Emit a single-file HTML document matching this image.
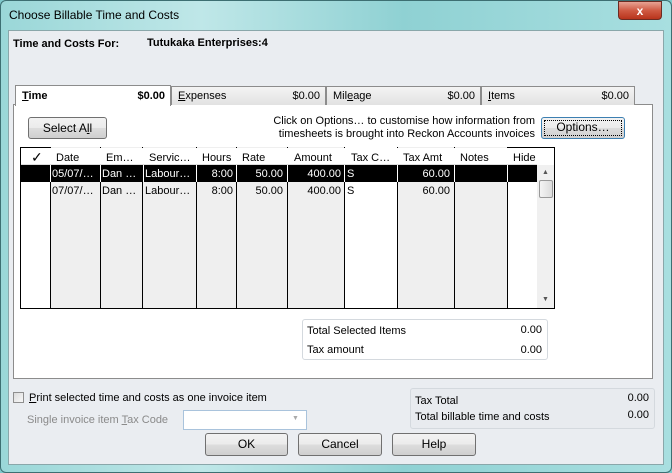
<!DOCTYPE html>
<html><head><style>
*{box-sizing:border-box;margin:0;padding:0}
body{width:672px;height:473px;position:relative;overflow:hidden;font-family:"Liberation Sans",sans-serif;font-size:11px;color:#000;background:#7fc9cc}
.abs{position:absolute}
.frame{left:0;top:0;width:672px;height:473px;background:linear-gradient(90deg,#9ad7d8,#bfe7e8 30%,#8fd1d3 60%,#a8dfe0);border:1px solid #3d6f72;border-radius:6px}
.client{left:8px;top:30px;width:656px;height:435px;background:#eaedf1;border:1px solid #8aa7aa}
.btn{position:absolute;border:1px solid #707070;border-radius:3px;background:linear-gradient(#f2f2f2,#ebebeb 50%,#dddddd 51%,#cfcfcf);text-align:center;font-size:12px}
.tab{position:absolute;top:86px;height:19px;border:1px solid #8c8c8c;border-bottom:none;background:linear-gradient(#f4f4f4,#e2e2e2);font-size:11px;padding:3px 4px 0 6px}
.tab span{position:absolute;right:5px;top:3px}
.col{position:absolute;top:147px;height:161px;border-right:1px solid #000}
.h{position:absolute;top:152px;font-size:11px}
.c{position:absolute;font-size:11px}
</style></head><body>
<div class="abs frame"></div>
<div class="abs" style="left:9px;top:8px;font-size:12px;color:#000">Choose Billable Time and Costs</div>
<div class="abs" style="left:618px;top:1px;width:44px;height:19px;border:1px solid #6b2b22;border-radius:0 0 4px 4px;background:linear-gradient(#e6a394,#cf5a43 50%,#b8341c);color:#fff;font-weight:bold;text-align:center;font-size:12px;line-height:18px">x</div>
<div class="abs client"></div>
<div class="abs" style="left:13px;top:38px;font-weight:bold;font-size:11px">Time and Costs For:</div>
<div class="abs" style="left:147px;top:37px;font-weight:bold;font-size:11px">Tutukaka Enterprises:4</div>
<div class="abs" style="left:13px;top:104px;width:640px;height:275px;background:#fff;border:1px solid #8c8c8c"></div>
<div class="tab" style="left:15px;width:156px;top:85px;height:21px;background:#fff;font-weight:bold;font-size:11px;padding-top:4px"><u>T</u>ime<span style="top:4px">$0.00</span></div>
<div class="tab" style="left:171px;width:155px"><u>E</u>xpenses<span>$0.00</span></div>
<div class="tab" style="left:326px;width:155px">Mil<u>e</u>age<span>$0.00</span></div>
<div class="tab" style="left:481px;width:154px"><u>I</u>tems<span>$0.00</span></div>
<div class="btn" style="left:28px;top:117px;width:79px;height:22px;line-height:20px">Select A<u>l</u>l</div>
<div class="abs" style="left:260px;top:115px;width:275px;text-align:right;font-size:11px;line-height:13px">Click on Options… to customise how information from<br>timesheets is brought into Reckon Accounts invoices</div>
<div class="btn" style="left:541px;top:117px;width:84px;height:22px;line-height:19px;border-color:#3c7fb1;outline:1px dotted #000;outline-offset:-4px">Options…</div>
<div class="abs" style="left:20px;top:147px;width:535px;height:162px;background:#fff;border:1px solid #000"></div>
<div class="col" style="left:50px;width:51px;background:#efefef;border-left:1px solid #000"></div>
<div class="col" style="left:101px;width:42px;background:#efefef"></div>
<div class="col" style="left:143px;width:54px;background:#efefef"></div>
<div class="col" style="left:197px;width:40px;background:#efefef"></div>
<div class="col" style="left:237px;width:51px;background:#efefef"></div>
<div class="col" style="left:288px;width:57px;background:#efefef"></div>
<div class="col" style="left:345px;width:53px;background:#fff"></div>
<div class="col" style="left:398px;width:57px;background:#efefef"></div>
<div class="col" style="left:455px;width:53px;background:#efefef"></div>
<div class="abs" style="left:21px;top:148px;width:516px;height:17px;background:#fff;border-bottom:1px solid #ddd"></div>
<div class="abs" style="left:537px;top:165px;width:17px;height:143px;background:#f0f0f0"></div>
<div class="abs" style="left:539px;top:180px;width:14px;height:18px;background:linear-gradient(90deg,#f4f4f4,#dcdcdc);border:1px solid #999;border-radius:2px"></div>
<div class="abs" style="left:542px;top:169px;font-size:7px;color:#555">▲</div>
<div class="abs" style="left:542px;top:296px;font-size:7px;color:#555">▼</div>
<div class="h" style="left:31px;top:149px;font-size:14px">✓</div>
<div class="h" style="left:56px">Date</div>
<div class="h" style="left:106px">Em…</div>
<div class="h" style="left:149px">Servic…</div>
<div class="h" style="left:202px">Hours</div>
<div class="h" style="left:242px">Rate</div>
<div class="h" style="left:294px">Amount</div>
<div class="h" style="left:351px">Tax C…</div>
<div class="h" style="left:403px">Tax Amt</div>
<div class="h" style="left:460px">Notes</div>
<div class="h" style="left:513px">Hide</div>
<div class="abs" style="left:21px;top:165px;width:516px;height:17px;background:#000"></div>
<div class="abs" style="left:50px;top:165px;width:1px;height:17px;background:#fff"></div>
<div class="abs" style="left:100px;top:165px;width:1px;height:17px;background:#fff"></div>
<div class="abs" style="left:143px;top:165px;width:1px;height:17px;background:#fff"></div>
<div class="abs" style="left:196px;top:165px;width:1px;height:17px;background:#fff"></div>
<div class="abs" style="left:236px;top:165px;width:1px;height:17px;background:#fff"></div>
<div class="abs" style="left:287px;top:165px;width:1px;height:17px;background:#fff"></div>
<div class="abs" style="left:344px;top:165px;width:1px;height:17px;background:#fff"></div>
<div class="abs" style="left:397px;top:165px;width:1px;height:17px;background:#fff"></div>
<div class="abs" style="left:454px;top:165px;width:1px;height:17px;background:#fff"></div>
<div class="abs" style="left:507px;top:165px;width:1px;height:17px;background:#fff"></div>
<div style="color:#fff">
<div class="c" style="left:52px;top:168px">05/07/…</div>
<div class="c" style="left:102px;top:168px">Dan …</div>
<div class="c" style="left:145px;top:168px">Labour…</div>
<div class="c" style="left:197px;top:168px;width:36px;text-align:right">8:00</div>
<div class="c" style="left:237px;top:168px;width:46px;text-align:right">50.00</div>
<div class="c" style="left:288px;top:168px;width:53px;text-align:right">400.00</div>
<div class="c" style="left:347px;top:168px">S</div>
<div class="c" style="left:398px;top:168px;width:52px;text-align:right">60.00</div>
</div>
<div class="c" style="left:52px;top:185px">07/07/…</div>
<div class="c" style="left:102px;top:185px">Dan …</div>
<div class="c" style="left:145px;top:185px">Labour…</div>
<div class="c" style="left:197px;top:185px;width:36px;text-align:right">8:00</div>
<div class="c" style="left:237px;top:185px;width:46px;text-align:right">50.00</div>
<div class="c" style="left:288px;top:185px;width:53px;text-align:right">400.00</div>
<div class="c" style="left:347px;top:185px">S</div>
<div class="c" style="left:398px;top:185px;width:52px;text-align:right">60.00</div>
<div class="abs" style="left:302px;top:319px;width:246px;height:41px;border:1px solid #d4d9de;border-radius:3px;background:#fff"></div>
<div class="c" style="left:307px;top:325px">Total Selected Items</div>
<div class="c" style="left:500px;top:324px;width:42px;text-align:right">0.00</div>
<div class="c" style="left:307px;top:344px">Tax amount</div>
<div class="c" style="left:500px;top:344px;width:42px;text-align:right">0.00</div>
<div class="abs" style="left:13px;top:392px;width:11px;height:11px;border:1px solid #8f8f8f;background:linear-gradient(135deg,#dcdcdc,#f8f8f8)"></div>
<div class="c" style="left:29px;top:392px"><u>P</u>rint selected time and costs as one invoice item</div>
<div class="c" style="left:27px;top:414px;color:#8a8a8a">Single invoice item <u>T</u>ax Code</div>
<div class="abs" style="left:183px;top:410px;width:124px;height:20px;background:#fff;border:1px solid #a9c3dc"></div>
<div class="abs" style="left:292px;top:415px;font-size:7px;color:#aaa">▼</div>
<div class="abs" style="left:410px;top:388px;width:245px;height:41px;border:1px solid #d4d9de;border-radius:3px;background:#e8ebef"></div>
<div class="c" style="left:415px;top:395px">Tax Total</div>
<div class="c" style="left:600px;top:392px;width:49px;text-align:right">0.00</div>
<div class="c" style="left:415px;top:411px">Total billable time and costs</div>
<div class="c" style="left:600px;top:409px;width:49px;text-align:right">0.00</div>
<div class="btn" style="left:205px;top:433px;width:83px;height:23px;line-height:21px">OK</div>
<div class="btn" style="left:298px;top:433px;width:84px;height:23px;line-height:21px">Cancel</div>
<div class="btn" style="left:392px;top:433px;width:84px;height:23px;line-height:21px">Help</div>
</body></html>
